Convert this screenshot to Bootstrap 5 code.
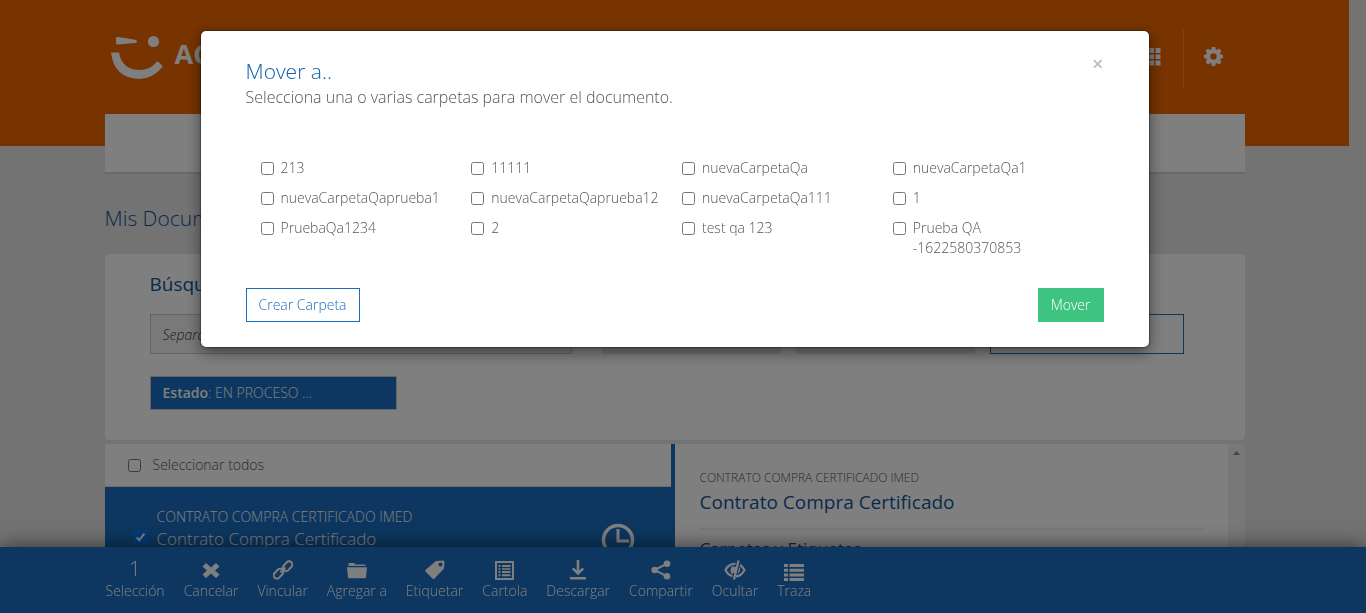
<!DOCTYPE html>
<html lang="es">
<head>
<meta charset="utf-8">
<meta name="viewport" content="width=device-width, initial-scale=1">
<title>Mis Documentos</title>
<link href="https://cdn.jsdelivr.net/npm/bootstrap@5.3.0/dist/css/bootstrap.min.css" rel="stylesheet">
<style>
  :root { --azul: #1a6ec0; --titulo: #0f5598; --naranja: #f06800; }
  html { overflow: hidden; }
  body { font: 300 14px/20px "Open Sans", sans-serif; color: #555; background: #e6e6e6; padding-right: 17px; overflow: hidden; height: 100vh; }
  input[type=checkbox] { width: 13px; height: 13px; margin: 0; flex: none; }
  svg { display: block; fill: currentColor; }
  .top-header { background: var(--naranja); height: 146px; color: #fff; }
  .brand-name { font: 700 27px/32px "Open Sans", sans-serif; margin: 0 0 8px 2px; }
  .tools { height: 60px; margin-top: 29px; }
  .tools a { color: #fff; padding: 0 22px 6px 20px; }
  .tools a + a { border-left: 1px solid #f58434; }
  .main-nav { height: 60px; margin-top: -32px; background: #fff; border-bottom: 2px solid #d2d2d2; }
  .page-title { font-size: 21px; line-height: 28px; font-weight: 300; color: var(--titulo); margin: 30px 0 22px; }
  .panel-box { background: #fff; }
  .search-box { border-radius: 4px; height: 186px; padding: 16px 61px 0 45px; }
  .box-title { font-size: 19px; line-height: 28px; font-weight: 400; color: var(--titulo); margin: 0 0 16px; }
  .fields { display: grid; grid-template-columns: 437fr 179fr 179fr 194fr; column-gap: 15px; }
  .fields > :first-child { margin-right: 15px; }
  .fields > * { height: 40px; border-radius: 0; min-width: 0; }
  .search-input { border: 1px solid #c9c9c9; background: #f2f2f2; padding: 0 12px; font-style: italic; font-weight: 300; }
  .search-input::placeholder { color: #444; opacity: 1; }
  .filter-select { border: 0; background: #e9e9e9; color: #555; padding: 0 12px; }
  .btn-line { border: 1px solid var(--azul); color: var(--azul); background: #fff; border-radius: 0; }
  .state-tag { width: 247px; height: 34px; line-height: 32px; border: 1px solid #c9c9c9; background: var(--azul); color: #fff; padding: 0 12px; margin-top: 22px; }
  .state-tag b { font-weight: 600; }
  .list-side { border-right: 4px solid var(--azul); }
  .select-all { height: 43px; padding: 0 23px; border-bottom: 1px solid #d8d8d8; gap: 12px; background: #fff; }
  .doc-row { background: var(--azul); color: #fff; height: 130px; padding: 20px 36px 0 29px; }
  .doc-row input { margin: 24px 10px 0 0; }
  .doc-row .doc-name { font-size: 17px; line-height: 24px; }
  .detail-side { padding: 25px 25px 0; }
  .detail-kind { font-size: 12px; line-height: 18px; }
  .detail-title { font-size: 19px; line-height: 30px; font-weight: 400; color: var(--titulo); margin: 0; }
  .detail-line { border-top: 2px solid #f2f2f2; margin-top: 11px; padding-top: 7px; }
  .detail-sub { font-size: 17px; line-height: 24px; color: var(--titulo); font-weight: 400; margin: 0; }
  .scroll-col { width: 17px; background: #f1f1f1; padding-top: 7px; color: #888; }
  .action-bar { height: 66px; background: var(--azul); box-shadow: 0 0 20px rgba(0,0,0,.6); padding-right: 17px; z-index: 1030; color: #fff; }
  .action-bar button { border: 0; background: none; color: #fff; padding: 0; font-weight: 300; }
  .action-bar .sign { height: 22px; font-size: 20px; }
  .actions { gap: 19px; padding: 12px 0 0 1px; }
  .modal { padding-right: 17px; }
  .modal-dialog { max-width: 948px; margin: 31px auto; }
  .modal-content { border: 0; border-radius: 5px; padding: 26px 45px 25px; box-shadow: 0 5px 15px rgba(0,0,0,.5), 0 0 2px #000; color: #555; }
  .modal-heading { font-size: 21px; line-height: 28px; font-weight: 300; color: #0f60aa; margin: 0; }
  .modal-lead { font-size: 16px; line-height: 24px; font-weight: 300; margin: 0 0 49px; }
  .close-x { border: 0; background: none; color: #bbb; font: 600 20px/14px "Open Sans", sans-serif; padding: 0; }
  .folders { padding-left: 15px; margin-bottom: 20px; }
  .folders label { gap: 7px; margin-bottom: 10px; padding-right: 16px; overflow-wrap: anywhere; }
  .folders input { margin-top: 4px; }
  .modal .btn { font-size: 14px; line-height: 20px; padding: 6px 12px; border-radius: 0; font-weight: 300; }
  .modal .btn-green { background: #3fc380; border: 1px solid #3fc380; color: #fff; }
</style>
</head>
<body>
<header class="top-header">
  <div class="container px-0 d-flex justify-content-between align-items-start">
    <a href="#" class="d-flex align-items-center text-white text-decoration-none pt-4 mt-2 ps-1" aria-label="Acepta">
      <svg width="64" height="52" viewBox="0 0 64 52"><path d="M7 6Q7 5 9 5L25 7.500Q28 8 28 9.500T25 11L9 12.500Q7 12.500 7 11Z"/><circle cx="44.500" cy="9.500" r="5.600"/><path d="M2 20.500H10Q13 38 31 38Q41 38 47.500 30Q48.500 29 49.500 30L53 33.500Q54 34.500 53 35.500Q43 47 30 47Q5 46 2 20.500Z"/></svg>
      <span class="brand-name">ACE</span>
    </a>
    <nav class="tools d-flex align-items-stretch">
      <a href="#" class="d-flex align-items-center" aria-label="Aplicaciones"><svg width="19" height="19" viewBox="0 0 19 19"><path d="M0 1h5v5H0zM7 1h5v5H7zM13.500 1h5v5h-5zM0 7.500h5v4.500H0zM7 7.500h5v4.500H7zM13.500 7.500h5v4.500h-5zM0 13.500h5v5H0zM7 13.500h5v5H7zM13.500 13.500h5v5h-5z"/></svg></a>
      <a href="#" class="d-flex align-items-center" aria-label="Configuración"><svg width="19" height="19" viewBox="0 0 20 20"><path fill-rule="evenodd" d="M8.300 0h3.400l.6 2.600 1.300.5L15.900 1.700l2.400 2.400-1.400 2.300.5 1.300 2.600.6v3.400l-2.600.6-.5 1.300 1.400 2.300-2.400 2.400-2.300-1.400-1.300.5-.6 2.600H8.300l-.6-2.600-1.300-.5-2.300 1.400-2.400-2.400 1.400-2.300-.5-1.300L0 11.700V8.300l2.600-.6.5-1.300L1.700 4.100 4.100 1.700l2.300 1.400 1.300-.5zM10 6.600a3.400 3.400 0 1 0 0 6.800 3.400 3.400 0 0 0 0-6.800z"/></svg></a>
    </nav>
  </div>
</header>
<main class="container px-0">
  <div class="main-nav"></div>
  <h1 class="page-title">Mis Documentos</h1>
  <section class="panel-box search-box">
    <h2 class="box-title">Búsqueda</h2>
    <div class="fields">
      <input class="search-input" type="text" placeholder="Separar por comas" aria-label="Buscar">
      <select class="filter-select" aria-label="Tipo"><option></option></select>
      <select class="filter-select" aria-label="Fecha"><option></option></select>
      <button class="btn-line" type="button" aria-label="Filtros"></button>
    </div>
    <div class="state-tag"><b>Estado</b>: EN PROCESO ...</div>
  </section>
  <section class="row g-0 mt-1">
    <div class="col-6 list-side">
      <label class="select-all d-flex align-items-center"><input type="checkbox"><span>Seleccionar todos</span></label>
      <div class="doc-row d-flex justify-content-between align-items-start">
        <label class="d-flex align-items-start">
          <input type="checkbox" checked>
          <span><span class="d-block">CONTRATO COMPRA CERTIFICADO IMED</span><span class="doc-name">Contrato Compra Certificado</span></span>
        </label>
        <svg class="mt-3" width="34" height="34" viewBox="0 0 34 34"><g fill="none" stroke="currentColor"><circle cx="17" cy="17" r="14.500" stroke-width="3.500"/><path d="M17 6v12h11" stroke-width="3"/></g></svg>
      </div>
    </div>
    <div class="col-6 panel-box d-flex">
      <div class="detail-side flex-grow-1">
        <div class="detail-kind">CONTRATO COMPRA CERTIFICADO IMED</div>
        <h2 class="detail-title">Contrato Compra Certificado</h2>
        <div class="detail-line"><h3 class="detail-sub">Carpetas y Etiquetas</h3></div>
      </div>
      <div class="scroll-col"><svg class="mx-auto" width="7" height="4" viewBox="0 0 7 4"><path d="M0 4L3.500 0L7 4z"/></svg></div>
    </div>
  </section>
</main>
<footer class="action-bar fixed-bottom">
  <div class="container px-0">
    <div class="actions d-flex">
      <div class="text-center"><div class="sign">1</div>Selección</div>
      <button type="button"><span class="sign d-flex align-items-center justify-content-center"><svg width="18" height="17" viewBox="0 0 18 17"><path d="M4 1L9 5.500 14 1 17.500 4.500 13 8.500 17.500 12.500 14 16 9 11.500 4 16 .5 12.500 5 8.500.5 4.500z"/></svg></span>Cancelar</button>
      <button type="button"><span class="sign d-flex align-items-center justify-content-center"><svg width="20" height="20" viewBox="0 0 20 20"><g fill="none" stroke="currentColor" stroke-width="2"><rect x="9" y="3" width="11" height="6.500" rx="3.200" transform="rotate(-47 14.500 6.200)"/><rect x="0" y="10.500" width="11" height="6.500" rx="3.200" transform="rotate(-47 5.500 13.800)"/><path d="M7.500 12.500l5-5"/></g></svg></span>Vincular</button>
      <button type="button"><span class="sign d-flex align-items-center justify-content-center"><svg width="20" height="17" viewBox="0 0 20 17"><path d="M1.500 4V1.500Q1.500 1 2 1h5l1.500 1.500H18q.5 0 .5.500v1zM0 5.200h20l-1 10.300q0 .8-1 .8H2q-1 0-1-.8z"/></svg></span>Agregar a</button>
      <button type="button"><span class="sign d-flex align-items-center justify-content-center"><svg width="20" height="20" viewBox="0 0 20 20"><path fill-rule="evenodd" d="M11 1l7-.5q1.500 0 1.500 1.500L19 8.500l-9.500 10q-1 1-2 0L.7 11.800q-.8-1 0-2zM15.500 2.600a2 2 0 1 0 0 4 2 2 0 0 0 0-4z"/></svg></span>Etiquetar</button>
      <button type="button"><span class="sign d-flex align-items-center justify-content-center"><svg width="19" height="19" viewBox="0 0 19 19"><path fill-rule="evenodd" d="M0 0h19v19H0zM2 2v15h15V2z"/><path d="M3.500 4h2v2h-2zM7 4h8.500v2H7zM3.500 7.200h2v1.600h-2zM7 7.200h8.500v1.600H7zM3.500 10h2v2h-2zM7 10h8.500v2H7zM3.500 13.200h2v2h-2zM7 13.200h8.500v2H7z"/></svg></span>Cartola</button>
      <button type="button"><span class="sign d-flex align-items-center justify-content-center"><svg width="16" height="20" viewBox="0 0 16 20"><path d="M6.700 0h2.600v10.500l3-3 1.800 1.800L8 15.300 1.900 9.300l1.800-1.800 3 3zM0 17h16v2.600H0z"/></svg></span>Descargar</button>
      <button type="button"><span class="sign d-flex align-items-center justify-content-center"><svg width="20" height="20" viewBox="0 0 20 20"><circle cx="16" cy="3.700" r="3.300"/><circle cx="16" cy="16.300" r="3.300"/><circle cx="3.700" cy="10" r="3.300"/><path d="M16 3.700L3.700 10 16 16.300" fill="none" stroke="currentColor" stroke-width="2"/></svg></span>Compartir</button>
      <button type="button"><span class="sign d-flex align-items-center justify-content-center"><svg width="22" height="20" viewBox="0 0 22 20"><g fill="none" stroke="currentColor" stroke-width="2.200"><path d="M11.500 3.800Q4.500 3.500 1.500 10q2.500 5 7 6.200M16 5q3 2 4.500 5-3 6-8.500 6.400M9.500 6.500q-3.500 3.500-.5 7"/><path d="M14.500.5L10 19.500"/></g><path d="M9 8q3-3 4 0l-2 5q-3 0-2-5zM15.500 6.500q2 4-2 7.500z"/></svg></span>Ocultar</button>
      <button type="button"><span class="sign d-flex align-items-center justify-content-center"><svg class="mt-1" width="20" height="17" viewBox="0 0 20 17"><path d="M0 0h4v3H0zM5.500 0H20v3H5.500zM0 4.700h4v3H0zM5.500 4.700H20v3H5.500zM0 9.400h4v3H0zM5.500 9.400H20v3H5.500zM0 14h4v3H0zM5.500 14H20v3H5.500z"/></svg></span>Traza</button>
    </div>
  </div>
</footer>

<div class="modal-backdrop show"></div>
<div class="modal d-block" role="dialog" aria-labelledby="mover-titulo">
  <div class="modal-dialog">
    <div class="modal-content">
      <div class="d-flex justify-content-between align-items-start">
        <div>
          <h2 class="modal-heading" id="mover-titulo">Mover a..</h2>
          <p class="modal-lead">Selecciona una o varias carpetas para mover el documento.</p>
        </div>
        <button class="close-x" type="button" aria-label="Cerrar">×</button>
      </div>
      <div class="folders">
        <div class="row g-0">
          <label class="col-3 d-flex align-items-start"><input type="checkbox"><span>213</span></label>
          <label class="col-3 d-flex align-items-start"><input type="checkbox"><span>11111</span></label>
          <label class="col-3 d-flex align-items-start"><input type="checkbox"><span>nuevaCarpetaQa</span></label>
          <label class="col-3 d-flex align-items-start"><input type="checkbox"><span>nuevaCarpetaQa1</span></label>
          <label class="col-3 d-flex align-items-start"><input type="checkbox"><span>nuevaCarpetaQaprueba1</span></label>
          <label class="col-3 d-flex align-items-start"><input type="checkbox"><span>nuevaCarpetaQaprueba12</span></label>
          <label class="col-3 d-flex align-items-start"><input type="checkbox"><span>nuevaCarpetaQa111</span></label>
          <label class="col-3 d-flex align-items-start"><input type="checkbox"><span>1</span></label>
          <label class="col-3 d-flex align-items-start"><input type="checkbox"><span>PruebaQa1234</span></label>
          <label class="col-3 d-flex align-items-start"><input type="checkbox"><span>2</span></label>
          <label class="col-3 d-flex align-items-start"><input type="checkbox"><span>test qa 123</span></label>
          <label class="col-3 d-flex align-items-start"><input type="checkbox"><span>Prueba QA -1622580370853</span></label>
        </div>
      </div>
      <div class="d-flex justify-content-between">
        <button class="btn btn-line" type="button">Crear Carpeta</button>
        <button class="btn btn-green" type="button">Mover</button>
      </div>
    </div>
  </div>
</div>
<script src="https://cdn.jsdelivr.net/npm/bootstrap@5.3.0/dist/js/bootstrap.bundle.min.js"></script>
</body>
</html>
